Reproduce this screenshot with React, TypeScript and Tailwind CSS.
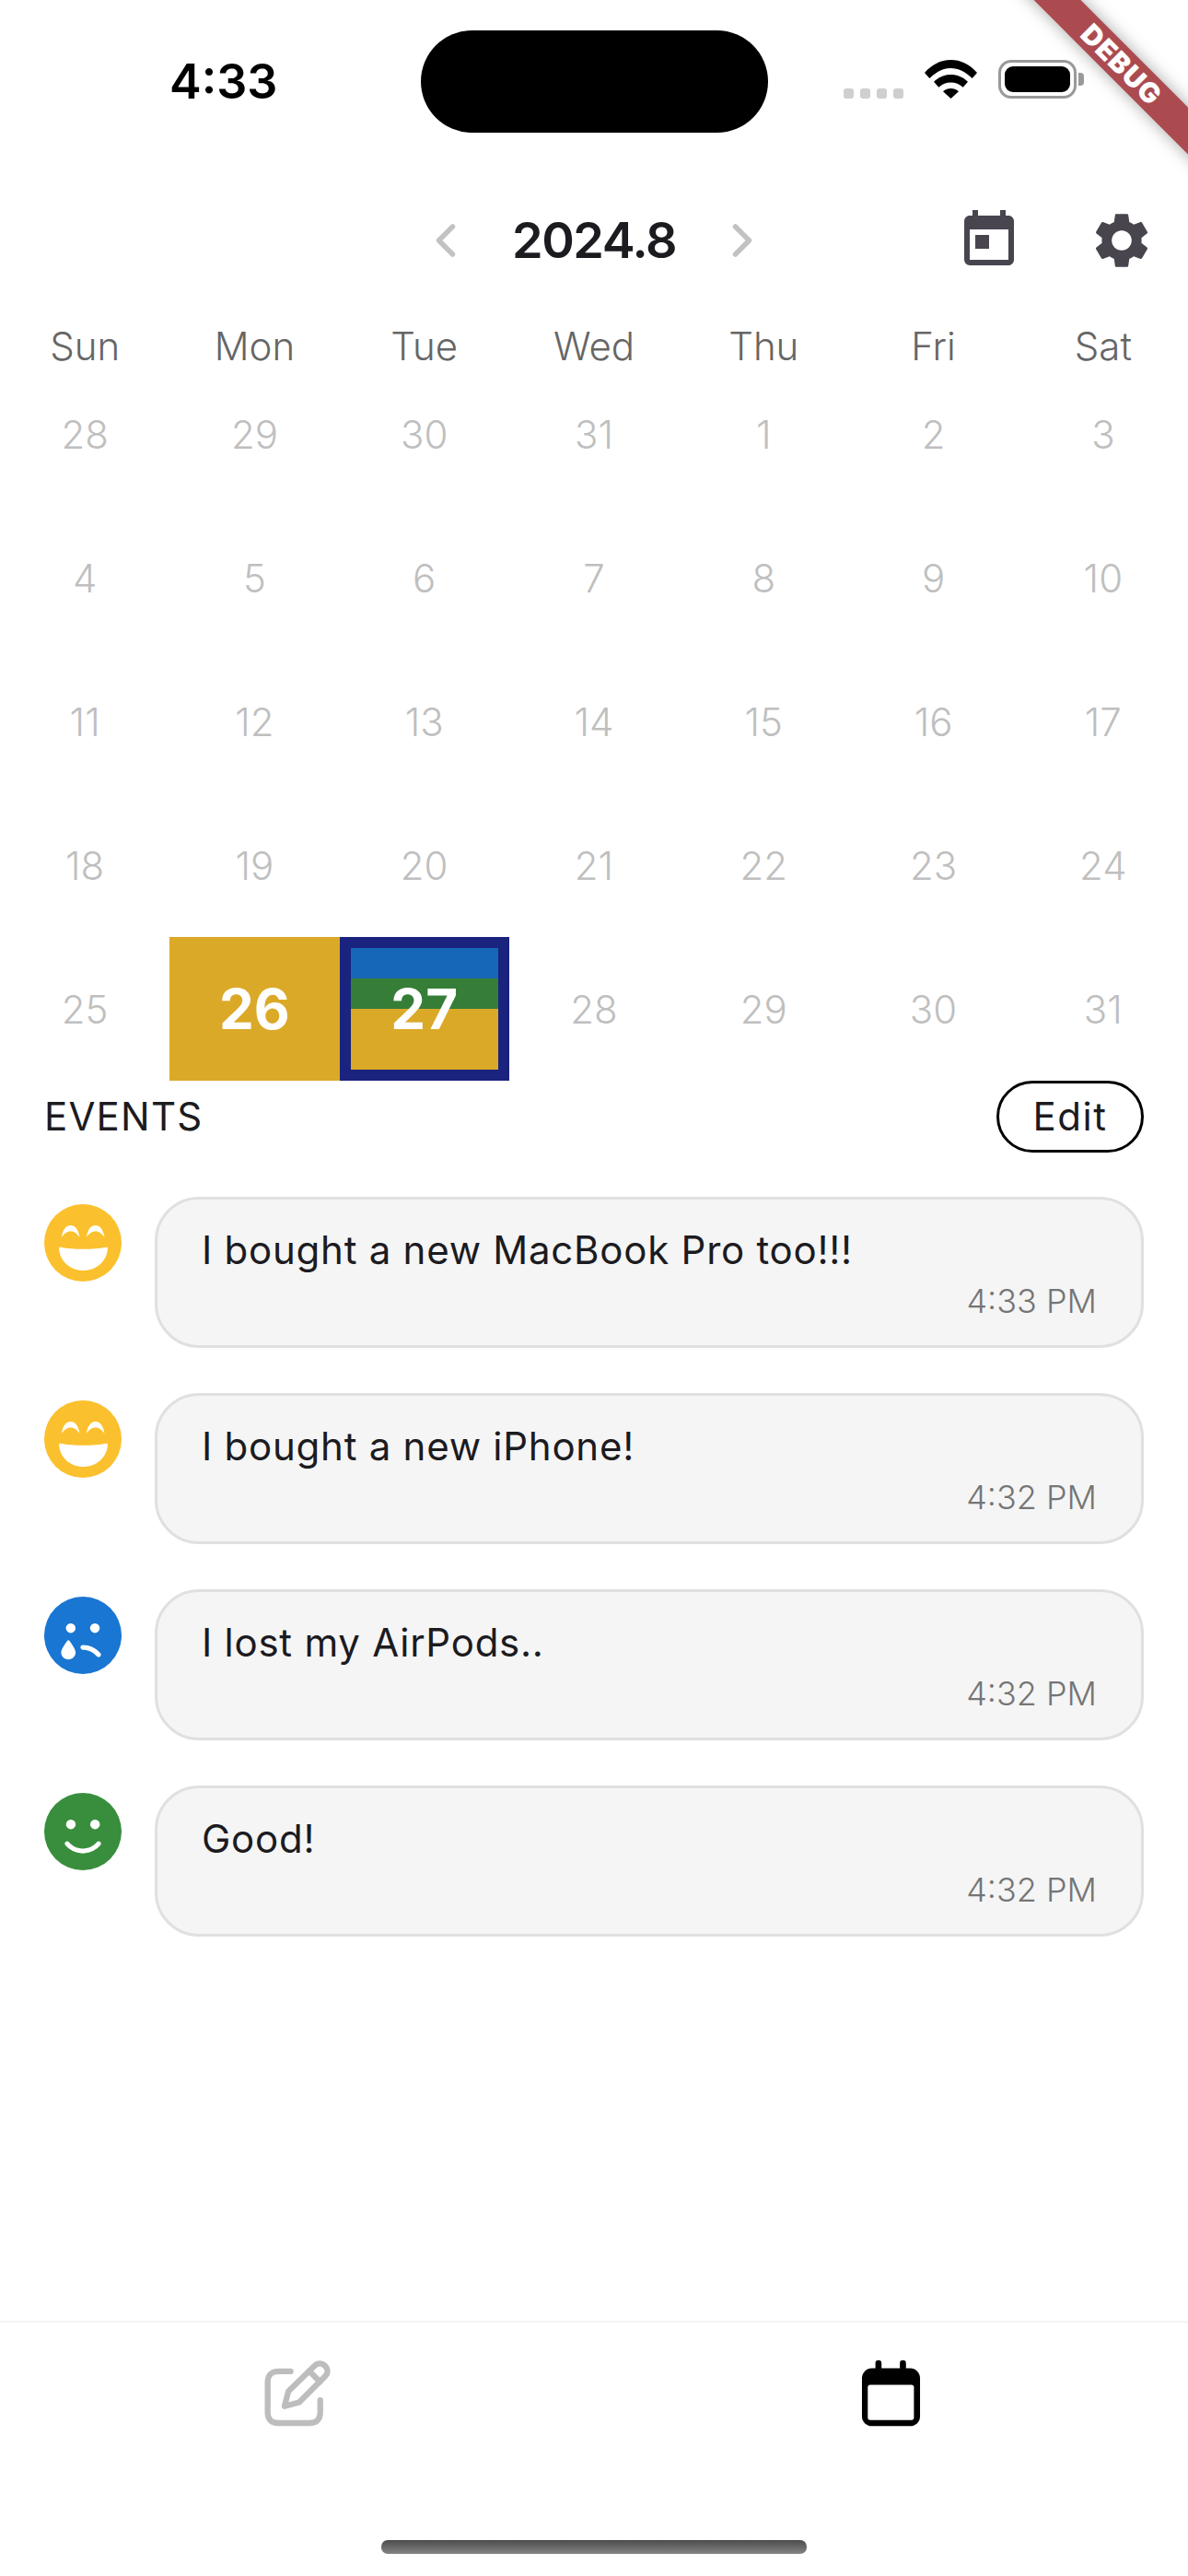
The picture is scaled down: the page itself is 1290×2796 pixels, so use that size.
import type { ComponentType } from 'react';
import { ChevronLeft, ChevronRight } from 'lucide-react';
import { MdToday, MdSettings } from 'react-icons/md';
import { FaFaceSadTear, FaFaceSmile } from 'react-icons/fa6';

const WEEK_DAYS = ['Sun', 'Mon', 'Tue', 'Wed', 'Thu', 'Fri', 'Sat'];

const DAYS = [
  28, 29, 30, 31, 1, 2, 3,
  4, 5, 6, 7, 8, 9, 10,
  11, 12, 13, 14, 15, 16, 17,
  18, 19, 20, 21, 22, 23, 24,
  25, 26, 27, 28, 29, 30, 31,
];

interface FaceProps {
  size?: number;
  className?: string;
}

interface EventItem {
  icon: ComponentType<FaceProps>;
  color: string;
  text: string;
  time: string;
}

function GrinFace({ size, className }: FaceProps) {
  return (
    <svg width={size} height={size} viewBox="0 0 84 84" className={className}>
      <circle cx="42" cy="42" r="42" fill="currentColor" />
      <path fill="white" d="M19 36C20 27 24 23 28.7 23C33.5 23 37 27 38.5 36C35 31 32 29.5 28.7 29.5C25.5 29.5 22 31 19 36Z" />
      <path fill="white" d="M46 36C47 27 51 23 55.7 23C60.5 23 64 27 65.5 36C62 31 59 29.5 55.7 29.5C52.5 29.5 49 31 46 36Z" />
      <path fill="white" d="M16 48C16 47 17 46.5 18 46.7C32 49.5 53 49.5 67 46.7C68 46.5 69 47 69 48C68 62 57 72 42.5 72C28 72 17 62 16 48Z" />
    </svg>
  );
}

const EVENTS: EventItem[] = [
  { icon: GrinFace, color: 'text-[#fbc02d]', text: 'I bought a new MacBook Pro too!!!', time: '4:33 PM' },
  { icon: GrinFace, color: 'text-[#fbc02d]', text: 'I bought a new iPhone!', time: '4:32 PM' },
  { icon: FaFaceSadTear, color: 'text-[#1976d2]', text: 'I lost my AirPods..', time: '4:32 PM' },
  { icon: FaFaceSmile, color: 'text-[#388e3c]', text: 'Good!', time: '4:32 PM' },
];

function WifiIcon() {
  return (
    <svg width="57" height="42" viewBox="0 0 171 126" fill="black">
      <path d="M0 42C48 -14 123 -14 171 42L155 60C110 16 61 16 16 60Z" />
      <path d="M30 71C62 40 109 40 141 71L125 89C103 68 68 68 46 89Z" />
      <path d="M60 103C75 90 96 90 111 103L85.5 126Z" />
    </svg>
  );
}

function Battery() {
  return (
    <div className="flex items-center gap-[2px]">
      <div className="w-[85px] h-[42px] rounded-[14px] border-[3px] border-[#999999] p-[4px]">
        <div className="w-full h-full rounded-[9px] bg-black" />
      </div>
      <div className="w-[6px] h-[14px] rounded-r-[4px] bg-[#999999]" />
    </div>
  );
}

function StatusBar() {
  return (
    <div className="h-[201px] flex items-start pt-[33px] shrink-0">
      <div className="w-[457px] h-[111px] flex items-center pl-[184px]">
        <span className="text-[52px] leading-none font-semibold text-black">4:33</span>
      </div>
      <div className="w-[377px] h-[111px] rounded-full bg-black" />
      <div className="h-[74px] flex items-end pl-[82px]">
        <div className="flex gap-[7px] mr-[23px]">
          {[0, 1, 2, 3].map((dot) => (
            <div key={dot} className="w-[11px] h-[11px] rounded-[3px] bg-[#cfcfcf]" />
          ))}
        </div>
        <WifiIcon />
        <div className="ml-[23px]">
          <Battery />
        </div>
      </div>
    </div>
  );
}

function Header() {
  return (
    <div className="h-[120px] grid grid-cols-[1fr_auto_1fr] items-center shrink-0">
      <div />
      <div className="flex items-center gap-[42px]">
        <ChevronLeft size={60} strokeWidth={2.2} className="text-[#c2c2c2]" />
        <span className="text-[54px] leading-none font-semibold text-[#1c1b1f] tracking-[-1.4px]">2024.8</span>
        <ChevronRight size={60} strokeWidth={2.2} className="text-[#c2c2c2]" />
      </div>
      <div className="flex items-center justify-end gap-[72px] pr-[36px]">
        <MdToday size={72} className="text-[#49454f]" />
        <MdSettings size={72} className="text-[#49454f]" />
      </div>
    </div>
  );
}

function Calendar() {
  return (
    <div className="shrink-0">
      <div className="grid grid-cols-7 h-[72px] items-end">
        {WEEK_DAYS.map((day) => (
          <div key={day} className="h-[36px] flex items-center justify-center text-[42px] font-light text-[#666666]">
            {day}
          </div>
        ))}
      </div>
      <div className="grid grid-cols-7 auto-rows-[156px]">
        {DAYS.map((day, index) => {
          if (index === 29) {
            return (
              <div key={index} className="flex items-center justify-center bg-[#dba928] text-[60px] font-bold text-white">
                {day}
              </div>
            );
          }
          if (index === 30) {
            return (
              <div key={index} className="relative border-[12px] border-[#1a237e] bg-[#dba928]">
                <div className="h-[33px] bg-[#1767b8]" />
                <div className="h-[33px] bg-[#367e38]" />
                <div className="absolute inset-0 flex items-center justify-center text-[60px] font-bold text-white">
                  {day}
                </div>
              </div>
            );
          }
          return (
            <div key={index} className="flex items-center justify-center text-[42px] font-light text-[#bfbfbf]">
              {day}
            </div>
          );
        })}
      </div>
    </div>
  );
}

function EventRow({ event }: { event: EventItem }) {
  const Icon = event.icon;
  return (
    <div className="flex gap-[36px]">
      <Icon size={84} className={`mt-[8px] shrink-0 ${event.color}`} />
      <div className="flex-1 h-[164px] rounded-[48px] border-[3px] border-[#e0e0e0] bg-[#f5f5f5] pt-[27px] pl-[48px] pr-[48px]">
        <p className="text-[42px] leading-[56px] text-[#1c1b1f] tracking-[0.75px]">{event.text}</p>
        <p className="mt-[5px] text-right text-[36px] leading-[44px] font-light text-[#757575]">{event.time}</p>
      </div>
    </div>
  );
}

function EditIcon() {
  return (
    <svg width="78" height="78" viewBox="70 55 235 235" fill="none" stroke="#bdbdbd" strokeWidth="19" strokeLinecap="round" strokeLinejoin="round">
      <path d="M165 103H125C103 103 90 116 90 138V238C90 260 103 272 125 272H227C249 272 262 260 262 238V197" />
      <path d="M158 168L243 85C253 75 268 75 278 85C288 95 288 109 278 119L193 204L145 217Z" />
      <path d="M226 102L261 137" />
    </svg>
  );
}

function CalendarTabIcon() {
  return (
    <svg width="75" height="78" viewBox="60 55 226 235">
      <rect x="78" y="93" width="190" height="189" rx="32" fill="black" />
      <rect x="97" y="147" width="151" height="115" rx="8" fill="white" />
      <rect x="122" y="66" width="20" height="50" rx="10" fill="black" />
      <rect x="202" y="66" width="20" height="50" rx="10" fill="black" />
    </svg>
  );
}

function BottomNav() {
  return (
    <div className="h-[277px] shrink-0 border-t-[2px] border-[#f5f5f5] flex flex-col">
      <div className="grid grid-cols-2 pt-[37px]">
        <div className="flex justify-center">
          <EditIcon />
        </div>
        <div className="flex justify-center">
          <CalendarTabIcon />
        </div>
      </div>
      <div className="mt-auto mb-[24px] self-center w-[462px] h-[15px] rounded-[7px] bg-linear-to-b from-[#4c4c4c] to-[#858585]" />
    </div>
  );
}

export default function App() {
  return (
    <div className="relative w-[1290px] h-[2796px] overflow-hidden bg-white flex flex-col font-['Inter',sans-serif]">
      <StatusBar />
      <Header />
      <Calendar />

      <div className="flex-1 px-[48px]">
        <div className="h-[78px] flex items-center justify-between">
          <span className="text-[42px] leading-none text-[#1c1b1f] tracking-[1.2px]">EVENTS</span>
          <button className="w-[160px] h-[78px] rounded-full border-[3px] border-black text-[42px] leading-none text-[#1c1b1f] tracking-[1.5px]">
            Edit
          </button>
        </div>
        <div className="mt-[48px] flex flex-col gap-[49px]">
          {EVENTS.map((event, index) => (
            <EventRow key={index} event={event} />
          ))}
        </div>
      </div>

      <BottomNav />

      <div className="absolute left-[1018px] top-[52px] w-[400px] h-[36px] rotate-45 bg-[#ab4b50] shadow-[0_0_18px_rgba(0,0,0,0.35)] flex items-center justify-center text-[30px] leading-none font-black text-white tracking-[1px]">
        DEBUG
      </div>
    </div>
  );
}
